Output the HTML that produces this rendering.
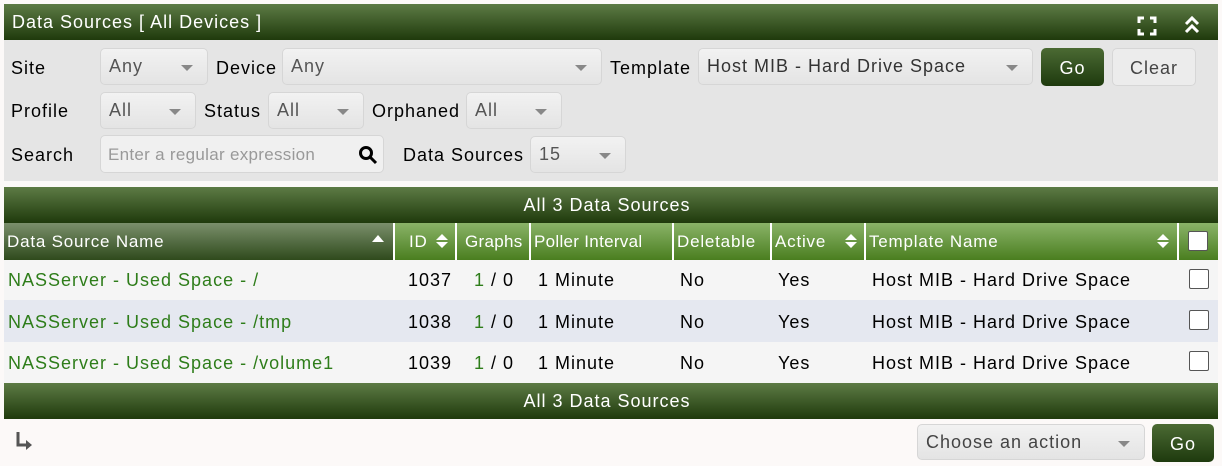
<!DOCTYPE html>
<html><head><meta charset="utf-8"><style>
*{box-sizing:border-box;margin:0;padding:0}
body{width:1222px;height:466px;background:#fcf9f8;font-family:"Liberation Sans",sans-serif;font-size:18px;letter-spacing:1px;color:#000;position:relative;overflow:hidden}
.a{position:absolute;white-space:nowrap}
.bar{position:absolute;left:4px;width:1214px;background:linear-gradient(#5d7b45,#1f3a0c);color:#fff}
.sel{position:absolute;height:37px;border:1px solid #d6d6d6;border-radius:5px;background:linear-gradient(#f2f2f2,#e4e4e4);color:#555;padding:7px 8px;font-size:18px;white-space:nowrap}
.sel:after{content:"";position:absolute;right:14px;top:16px;border-left:6px solid transparent;border-right:6px solid transparent;border-top:6px solid #888}
.lbl{position:absolute;font-size:18px;white-space:nowrap}
.th{position:absolute;top:223px;height:37px;color:#fff;font-size:17px;letter-spacing:0.8px;padding-top:9px;padding-left:3px;border-right:2px solid #fff;white-space:nowrap;overflow:hidden}
.row{position:absolute;left:4px;width:1214px;font-size:18px}
.g{color:#2e7d1a}
.cb{position:absolute;width:20px;height:20px;border:1px solid #555;background:#fff;border-radius:2px}
.sort{position:absolute;width:0;height:0;border-left:6px solid transparent;border-right:6px solid transparent}
</style></head><body>
<div class="bar" style="top:4px;height:36px"><span class="a" style="left:8px;top:8px">Data Sources [ All Devices ]</span>
<svg class="a" style="left:1133px;top:12px" width="20" height="20" viewBox="0 0 20 20" fill="none" stroke="#fff" stroke-width="3"><path d="M2 7V2h5M13 2h5v5M18 13v5h-5M7 18H2v-5"/></svg>
<svg class="a" style="left:1180px;top:12px" width="16" height="18" viewBox="0 0 16 18" fill="none" stroke="#fff" stroke-width="3"><path d="M2 8l6-6 6 6M2 16l6-6 6 6"/></svg></div>
<div class="a" style="left:4px;top:40px;width:1214px;height:141px;background:#e5e5e5"></div>
<span class="lbl" style="left:11px;top:58px">Site</span>
<div class="sel" style="left:100px;top:48px;width:108px">Any</div>
<span class="lbl" style="left:216px;top:58px">Device</span>
<div class="sel" style="left:282px;top:48px;width:320px">Any</div>
<span class="lbl" style="left:610px;top:58px">Template</span>
<div class="sel" style="left:698px;top:48px;width:335px;color:#333">Host MIB - Hard Drive Space</div>
<div class="a" style="left:1041px;top:48px;width:63px;height:38px;border-radius:5px;background:linear-gradient(#4b6a33,#1e3a0e);color:#fff;text-align:center;padding-top:10px">Go</div>
<div class="a" style="left:1112px;top:48px;width:84px;height:38px;border-radius:5px;border:1px solid #d6d6d6;background:#ececec;color:#444;text-align:center;padding-top:9px">Clear</div>
<span class="lbl" style="left:11px;top:101px">Profile</span>
<div class="sel" style="left:100px;top:92px;width:96px">All</div>
<span class="lbl" style="left:204px;top:101px">Status</span>
<div class="sel" style="left:268px;top:92px;width:96px">All</div>
<span class="lbl" style="left:372px;top:101px">Orphaned</span>
<div class="sel" style="left:466px;top:92px;width:96px">All</div>
<span class="lbl" style="left:11px;top:145px">Search</span>
<div class="a" style="left:100px;top:135px;width:284px;height:38px;border:1px solid #d6d6d6;border-radius:5px;background:#f0f0f0;color:#999;padding:9px 7px;font-size:17px;letter-spacing:0.3px">Enter a regular expression</div>
<svg class="a" style="left:358px;top:145px" width="20" height="20" viewBox="0 0 20 20" fill="none" stroke="#000" stroke-width="3"><circle cx="8" cy="8" r="5.5"/><path d="M12 12l6 6"/></svg>
<span class="lbl" style="left:403px;top:145px">Data Sources</span>
<div class="sel" style="left:530px;top:136px;width:96px">15</div>

<div class="bar" style="top:187px;height:36px;text-align:center;padding-top:8px;padding-right:8px">All 3 Data Sources</div>
<div class="a" style="left:4px;top:223px;width:1214px;height:37px;background:linear-gradient(#8ab368,#4a7e1f)"></div>
<div class="th" style="left:4px;width:391px;background:linear-gradient(#7a8f6b,#2f4a1c)">Data Source Name</div>
<div class="sort" style="left:372px;top:235px;border-bottom:7px solid #fff"></div>
<div class="th" style="left:395px;width:62px;padding-left:14px">ID</div>
<div class="sort" style="left:436px;top:234px;border-bottom:6px solid #fff"></div><div class="sort" style="left:436px;top:242px;border-top:6px solid #fff"></div>
<div class="th" style="left:457px;width:74px;padding-left:8px;letter-spacing:0.3px">Graphs</div>
<div class="th" style="left:531px;width:143px;letter-spacing:0.3px">Poller Interval</div>
<div class="th" style="left:674px;width:98px">Deletable</div>
<div class="th" style="left:772px;width:94px">Active</div>
<div class="sort" style="left:845px;top:234px;border-bottom:6px solid #fff"></div><div class="sort" style="left:845px;top:242px;border-top:6px solid #fff"></div>
<div class="th" style="left:866px;width:313px">Template Name</div>
<div class="sort" style="left:1157px;top:234px;border-bottom:6px solid #fff"></div><div class="sort" style="left:1157px;top:242px;border-top:6px solid #fff"></div>
<div class="cb" style="left:1188px;top:231px"></div>

<div class="row" style="top:260px;height:40px;background:#f5f5f5"></div>
<div class="row" style="top:300px;height:42px;background:#e5e8f0"></div>
<div class="row" style="top:342px;height:41px;background:#f5f5f5"></div>
<span class="a g" style="left:8px;top:270px">NASServer - Used Space - /</span>
<span class="a g" style="left:8px;top:312px">NASServer - Used Space - /tmp</span>
<span class="a g" style="left:8px;top:353px">NASServer - Used Space - /volume1</span>
<span class="a" style="left:408px;top:270px">1037</span><span class="a" style="left:408px;top:312px">1038</span><span class="a" style="left:408px;top:353px">1039</span>
<span class="a" style="left:474px;top:270px"><span class="g">1</span> / 0</span><span class="a" style="left:474px;top:312px"><span class="g">1</span> / 0</span><span class="a" style="left:474px;top:353px"><span class="g">1</span> / 0</span>
<span class="a" style="left:538px;top:270px">1 Minute</span><span class="a" style="left:538px;top:312px">1 Minute</span><span class="a" style="left:538px;top:353px">1 Minute</span>
<span class="a" style="left:680px;top:270px">No</span><span class="a" style="left:680px;top:312px">No</span><span class="a" style="left:680px;top:353px">No</span>
<span class="a" style="left:778px;top:270px">Yes</span><span class="a" style="left:778px;top:312px">Yes</span><span class="a" style="left:778px;top:353px">Yes</span>
<span class="a" style="left:872px;top:270px">Host MIB - Hard Drive Space</span><span class="a" style="left:872px;top:312px">Host MIB - Hard Drive Space</span><span class="a" style="left:872px;top:353px">Host MIB - Hard Drive Space</span>
<div class="cb" style="left:1189px;top:269px"></div><div class="cb" style="left:1189px;top:310px"></div><div class="cb" style="left:1189px;top:351px"></div>

<div class="bar" style="top:383px;height:36px;text-align:center;padding-top:8px;padding-right:8px">All 3 Data Sources</div>
<svg class="a" style="left:15px;top:430px" width="20" height="20" viewBox="0 0 20 20"><path d="M3 2v13h9" fill="none" stroke="#555" stroke-width="3"/><path d="M11 10l6 5-6 5z" fill="#555"/></svg>
<div class="sel" style="left:917px;top:424px;width:228px;height:36px;color:#444">Choose an action</div>
<div class="a" style="left:1152px;top:424px;width:62px;height:38px;border-radius:5px;background:linear-gradient(#4b6a33,#1e3a0e);color:#fff;text-align:center;padding-top:10px">Go</div>
</body></html>
